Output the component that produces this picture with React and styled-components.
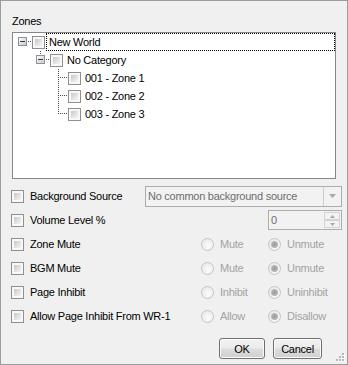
import React from 'react';
import styled, { createGlobalStyle } from 'styled-components';

const Global = createGlobalStyle`
  html, body { margin: 0; padding: 0; background: #f0f0f0; }
  body { font-family: "Liberation Sans", Arial, sans-serif; font-size: 11px; }
`;

const Window = styled.div`
  box-sizing: border-box;
  position: relative;
  width: 348px;
  height: 365px;
  border: 1px solid #9c9c9c;
  background: #f0f0f0;
  padding: 14px 6px 0 10px;
  display: flex;
  flex-direction: column;
  font-family: "Liberation Sans", Arial, sans-serif;
  font-size: 11px;
  letter-spacing: -0.25px;
  color: #000;
`;

const GroupLabel = styled.div`
  height: 13px;
  line-height: 13px;
  margin-left: 1px;
`;

const TreeBox = styled.div`
  box-sizing: border-box;
  margin: 4px 0 0 1px;
  width: 324px;
  height: 147px;
  border: 1px solid #828790;
  background: #fff;
  display: flex;
  flex-direction: column;
`;

const TreeRow = styled.div`
  display: flex;
  align-items: center;
  height: 18px;
  padding-left: ${p => p.$level * 18}px;
`;

const Connector = styled.svg`
  flex: none;
  width: 18px;
  height: 18px;
  display: block;
`;

const CheckBox = styled.span`
  box-sizing: border-box;
  flex: none;
  display: inline-block;
  width: 13px;
  height: 13px;
  padding: 2px;
  border: 1px solid #8f8f8f;
  background: linear-gradient(135deg, #c8c8c8 0%, #e4e4e4 60%, #f5f5f5 100%) content-box, #f8f8f8;
  margin-left: ${p => p.$ml || 0}px;
`;

const TreeLabel = styled.span`
  box-sizing: border-box;
  height: 18px;
  line-height: 16px;
  margin-left: 1px;
  padding: 0 2px;
  border: 1px dotted ${p => (p.$focus ? '#000' : 'transparent')};
  flex: ${p => (p.$focus ? 1 : 'none')};
  white-space: nowrap;
`;

const Options = styled.div`
  margin-top: 5px;
  display: flex;
  flex-direction: column;
`;

const OptRow = styled.div`
  display: grid;
  grid-template-columns: 134px 56px 67px 74px;
  height: 24px;
  align-items: center;
`;

const CheckLabel = styled.label`
  display: flex;
  align-items: center;
  gap: 6px;
  white-space: nowrap;
  grid-column: 1;
`;

const Radio = styled.span`
  box-sizing: border-box;
  position: relative;
  flex: none;
  width: 13px;
  height: 13px;
  border-radius: 50%;
  border: 1px solid #c4c4c4;
  background: radial-gradient(circle at 60% 65%, #fbfbfb 0%, #ececec 70%, #e0e0e0 100%);
  ${p => p.$on && `
    &::after {
      content: '';
      position: absolute;
      left: 2px; top: 2px;
      width: 7px; height: 7px;
      border-radius: 50%;
      background: radial-gradient(circle, #9a9a9a 0%, #b2b2b2 55%, #cdcdcd 100%);
    }
  `}
`;

const RadioLabel = styled.span`
  display: flex;
  align-items: center;
  gap: 6px;
  color: #a3a3a3;
  white-space: nowrap;
  grid-column: ${p => p.$col};
`;

const Combo = styled.div`
  box-sizing: border-box;
  grid-column: 2 / 5;
  height: 21px;
  border: 1px solid #adadad;
  background: #f2f2f2;
  display: flex;
  align-items: stretch;
`;

const ComboText = styled.span`
  flex: 1;
  line-height: 19px;
  padding-left: 2px;
  color: #6d6d6d;
  white-space: nowrap;
  overflow: hidden;
`;

const ComboButton = styled.span`
  width: 17px;
  border-left: 1px solid #cdcdcd;
  display: flex;
  align-items: center;
  justify-content: center;
`;

const Spin = styled.div`
  box-sizing: border-box;
  grid-column: 4;
  height: 20px;
  border: 1px solid #adadad;
  background: #f2f2f2;
  display: flex;
`;

const SpinText = styled.span`
  flex: 1;
  line-height: 18px;
  padding-left: 2px;
  color: #6d6d6d;
`;

const SpinButtons = styled.span`
  width: 16px;
  display: flex;
  flex-direction: column;
  padding: 1px 1px 1px 0;
`;

const SpinBtn = styled.span`
  box-sizing: border-box;
  flex: 1;
  border: 1px solid #d4d4d4;
  background: #f2f2f2;
  display: flex;
  align-items: center;
  justify-content: center;
`;

const ButtonRow = styled.div`
  display: flex;
  justify-content: flex-end;
  gap: 8px;
  margin-top: 10px;
  margin-right: 19px;
`;

const Button = styled.button`
  box-sizing: border-box;
  width: ${p => p.$w}px;
  height: 21px;
  padding: 0;
  border: 1px solid #707070;
  border-radius: 3px;
  background: linear-gradient(#f2f2f2 0%, #ebebeb 48%, #dddddd 52%, #cfcfcf 100%);
  box-shadow: inset 0 0 0 1px #fbfbfb;
  font-family: "Liberation Sans", Arial, sans-serif;
  font-size: 11px;
  letter-spacing: -0.25px;
  color: #000;
`;

const Grip = styled.svg`
  position: absolute;
  right: 2px;
  bottom: 2px;
  width: 11px;
  height: 11px;
`;

function dots(x1, y1, x2, y2, color = '#4a4a4a') {
  const out = [];
  if (y1 === y2) {
    for (let x = x1; x <= x2; x += 2) out.push(<rect key={`h${x}-${y1}`} x={x} y={y1} width="1" height="1" fill={color} />);
  } else {
    for (let y = y1; y <= y2; y += 2) out.push(<rect key={`v${x1}-${y}`} x={x1} y={y} width="1" height="1" fill={color} />);
  }
  return out;
}

function Expander({ up }) {
  return (
    <Connector viewBox="0 0 18 18">
      <defs>
        <linearGradient id="exg" x1="0" y1="0" x2="1" y2="1">
          <stop offset="0" stopColor="#ffffff" />
          <stop offset="1" stopColor="#c6c6c6" />
        </linearGradient>
      </defs>
      {up && dots(9, 0, 9, 3)}
      <rect x="5.5" y="4.5" width="8" height="8" fill="url(#exg)" stroke="#919191" />
      <rect x="7" y="8" width="5" height="1" fill="#1c3a6e" />
      {dots(15, 8, 17, 8)}
    </Connector>
  );
}

function Elbow({ last }) {
  return (
    <Connector viewBox="0 0 18 18">
      {dots(9, 0, 9, last ? 8 : 17)}
      {dots(11, 8, 17, 8)}
    </Connector>
  );
}

const tree = [
  { level: 0, label: 'New World', kind: 'root', focus: true },
  { level: 1, label: 'No Category', kind: 'node' },
  { level: 2, label: '001 - Zone 1', kind: 'leaf' },
  { level: 2, label: '002 - Zone 2', kind: 'leaf' },
  { level: 2, label: '003 - Zone 3', kind: 'leaf', last: true },
];

const radioRows = [
  { label: 'Zone Mute', a: 'Mute', b: 'Unmute' },
  { label: 'BGM Mute', a: 'Mute', b: 'Unmute' },
  { label: 'Page Inhibit', a: 'Inhibit', b: 'Uninhibit' },
  { label: 'Allow Page Inhibit From WR-1', a: 'Allow', b: 'Disallow' },
];

export default function App() {
  return (
    <>
      <Global />
      <Window>
        <GroupLabel>Zones</GroupLabel>
        <TreeBox>
          {tree.map(n => (
            <TreeRow key={n.label} $level={n.level}>
              {n.kind === 'leaf' ? <Elbow last={n.last} /> : <Expander up={n.kind === 'node'} />}
              <CheckBox $ml={1} />
              <TreeLabel $focus={n.focus}>{n.label}</TreeLabel>
            </TreeRow>
          ))}
        </TreeBox>

        <Options>
          <OptRow>
            <CheckLabel><CheckBox />Background Source</CheckLabel>
            <Combo>
              <ComboText>No common background source</ComboText>
              <ComboButton>
                <svg width="7" height="4" viewBox="0 0 7 4"><path d="M0 0h7L3.5 4z" fill="#a8a8a8" /></svg>
              </ComboButton>
            </Combo>
          </OptRow>
          <OptRow>
            <CheckLabel><CheckBox />Volume Level %</CheckLabel>
            <Spin>
              <SpinText>0</SpinText>
              <SpinButtons>
                <SpinBtn>
                  <svg width="5" height="3" viewBox="0 0 5 3"><path d="M2.5 0L5 3H0z" fill="#a8a8a8" /></svg>
                </SpinBtn>
                <SpinBtn>
                  <svg width="5" height="3" viewBox="0 0 5 3"><path d="M0 0h5L2.5 3z" fill="#a8a8a8" /></svg>
                </SpinBtn>
              </SpinButtons>
            </Spin>
          </OptRow>
          {radioRows.map(r => (
            <OptRow key={r.label}>
              <CheckLabel><CheckBox />{r.label}</CheckLabel>
              <RadioLabel $col={3}><Radio />{r.a}</RadioLabel>
              <RadioLabel $col={4}><Radio $on />{r.b}</RadioLabel>
            </OptRow>
          ))}
        </Options>

        <ButtonRow>
          <Button $w={46}>OK</Button>
          <Button $w={49}>Cancel</Button>
        </ButtonRow>

        <Grip viewBox="0 0 11 11">
          {[[8, 2], [5, 5], [8, 5], [2, 8], [5, 8], [8, 8]].map(([x, y]) => (
            <g key={`${x}-${y}`}>
              <rect x={x + 1} y={y + 1} width="2" height="2" fill="#ffffff" />
              <rect x={x} y={y} width="2" height="2" fill="#b8b8b8" />
            </g>
          ))}
        </Grip>
      </Window>
    </>
  );
}
